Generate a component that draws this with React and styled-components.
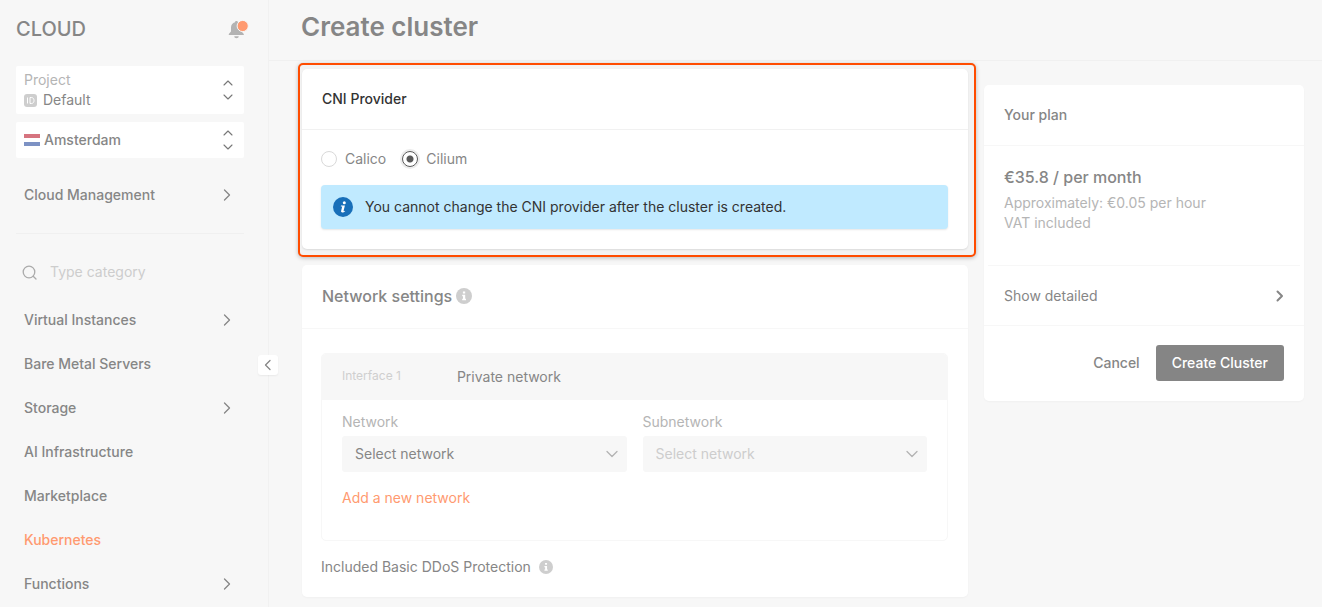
import React, { useState } from "react";
import styled, { createGlobalStyle } from "styled-components";

const GlobalStyle = createGlobalStyle`
  * {
    box-sizing: border-box;
  }
  body {
    margin: 0;
    background: #f7f7f7;
    color: #868686;
    font-family: Inter, "Liberation Sans", sans-serif;
    font-size: 14px;
    line-height: 20px;
  }
  button, input, select {
    font: inherit;
    color: inherit;
  }
  h1, h2, p {
    margin: 0;
  }
`;

const Page = styled.div`
  display: flex;
  align-items: stretch;
  min-height: 100vh;
`;

const Sidebar = styled.aside`
  position: relative;
  flex: none;
  width: 269px;
  padding: 0 24px 0 16px;
  border-right: 1px solid #f1f1f1;
`;

const Brand = styled.div`
  display: flex;
  align-items: center;
  justify-content: space-between;
  height: 58px;
  margin-bottom: 8px;
  font-size: 20px;
  font-weight: 500;
`;

const BellButton = styled.button`
  display: flex;
  padding: 0;
  margin-right: -5px;
  border: none;
  background: none;
`;

const Switcher = styled.button`
  display: flex;
  align-items: center;
  justify-content: space-between;
  width: 100%;
  height: ${props => (props.$tall ? "48px" : "36px")};
  margin-bottom: 8px;
  padding: 0 8px;
  border: none;
  border-radius: 2px;
  background: #fff;
  text-align: left;
  font-weight: ${props => (props.$tall ? 400 : 500)};
`;

const SwitcherLabel = styled.span`
  display: block;
  color: #b5b5b5;
`;

const SwitcherValue = styled.span`
  display: flex;
  align-items: center;
  gap: ${props => props.$gap || "4px"};
`;

const Nav = styled.nav`
  display: flex;
  flex-direction: column;
`;

const NavLink = styled.a`
  display: flex;
  align-items: center;
  justify-content: space-between;
  height: 44px;
  padding: 0 12px 0 8px;
  color: ${props => (props.$active ? "#ff9a70" : "#868686")};
  font-weight: 500;
  text-decoration: none;
`;

const Management = styled.div`
  padding: 7px 0 16px;
  margin-bottom: 16px;
  border-bottom: 1px solid #f0f0f0;
`;

const Search = styled.label`
  display: flex;
  align-items: center;
  gap: 13px;
  height: 44px;
  margin-bottom: 4px;
  padding-left: 6px;

  input {
    width: 100%;
    min-width: 0;
    padding: 0;
    border: none;
    outline: none;
    background: none;
  }
  svg {
    flex: none;
  }
  input::placeholder {
    color: #cdcdcd;
    opacity: 1;
  }
`;

// sits on top of the sidebar's right edge
const Collapse = styled.button`
  position: absolute;
  top: 355px;
  right: -10px;
  display: flex;
  align-items: center;
  justify-content: center;
  width: 20px;
  height: 20px;
  padding: 0;
  border: none;
  border-radius: 3px;
  background: #fff;
  box-shadow: 0 1px 2px rgba(0, 0, 0, 0.06);
`;

const Main = styled.main`
  flex: 1;
  min-width: 0;
`;

const Header = styled.header`
  height: 61px;
  padding: 11px 32px 0;
  border-bottom: 1px solid #f0f0f0;

  h1 {
    font-size: 26px;
    line-height: 32px;
    font-weight: 600;
  }
`;

const Content = styled.div`
  display: flex;
  align-items: flex-start;
  gap: 8px;
  padding: 2px 18px 10px 29px;
`;

const Column = styled.div`
  flex: 1;
  min-width: 0;
`;

const Highlight = styled.div`
  padding: 4px 6px 6px 2px;
  border: 2px solid #ff4c00;
  border-radius: 5px;
  background: #f3f3f3;
  box-shadow: 0 1px 4px rgba(0, 0, 0, 0.25);
`;

const Card = styled.section`
  border-radius: 5px;
  background: #fff;
  box-shadow: 0 1px 2px rgba(0, 0, 0, ${props => (props.$raised ? 0.1 : 0.03)});
`;

const NetworkCard = styled(Card)`
  margin: 8px 8px 0 4px;
`;

const PlanCard = styled(Card)`
  flex: none;
  width: 320px;
  margin-top: 22px;
`;

const CardHead = styled.div`
  display: flex;
  align-items: center;
  gap: 4px;
  height: ${props => (props.$large ? "64px" : "61px")};
  padding: 0 20px ${props => (props.$large ? "1px" : "0")};
  border-bottom: 1px solid ${props => (props.$strong ? "#f1f1f1" : "#f7f7f7")};

  h2 {
    color: ${props => (props.$strong ? "#333" : "#868686")};
    font-size: ${props => (props.$large ? "16px" : "14px")};
    font-weight: 500;
  }
`;

const ProviderBody = styled.div`
  padding: 19px 20px 20px 19px;
`;

const Radios = styled.div`
  display: flex;
  gap: 16px;
  margin-bottom: 16px;
`;

const Radio = styled.label`
  display: flex;
  align-items: center;
  gap: 8px;

  input {
    appearance: none;
    width: 16px;
    height: 16px;
    margin: 0;
    border: 1px solid #d9d9d9;
    border-radius: 50%;
    background: #fff;
  }
  input:checked {
    border-color: #595959;
    background: radial-gradient(circle, #595959 3px, #fff 4px);
    box-shadow: 0 0 0 2px #ececec;
  }
`;

const Notice = styled.div`
  display: flex;
  align-items: center;
  gap: 12px;
  height: 44px;
  padding: 0 12px;
  border-radius: 4px;
  background: #c0eaff;
  box-shadow: 0 1px 2px rgba(0, 0, 0, 0.1);
  color: #333;
`;

const NetworkBody = styled.div`
  padding: 24px 20px 20px 19px;
`;

const Interface = styled.div`
  overflow: hidden;
  margin-bottom: 16px;
  border: 1px solid #f7f7f7;
  border-radius: 5px;
`;

const InterfaceHead = styled.div`
  display: flex;
  align-items: center;
  gap: 56px;
  height: 46px;
  padding: 0 20px;
  background: #f7f7f7;

  small {
    color: #cfcfcf;
    font-size: 12px;
    line-height: 16px;
    padding-bottom: 2px;
  }
`;

const Fields = styled.div`
  display: grid;
  grid-template-columns: 1fr 1fr;
  gap: 16px;
  padding: 12px 20px 16px;
`;

const Field = styled.label`
  display: block;
  color: #b5b5b5;
`;

const SelectBox = styled.span`
  display: flex;
  align-items: center;
  margin-top: 4px;
  border-radius: 3px;
  background: #f7f7f7;
  color: #b3b3b3;

  select {
    appearance: none;
    flex: 1;
    height: 36px;
    margin-right: -24px;
    padding: 0 24px 0 13px;
    border: none;
    background: none;
    color: #868686;
  }
  select:disabled {
    color: #cdcdcd;
    opacity: 1;
  }
  svg {
    margin-right: 8px;
    pointer-events: none;
  }
`;

const AddLink = styled.a`
  display: inline-block;
  margin: 0 20px 32px;
  color: #ff9a70;
  text-decoration: none;
`;

const Protection = styled.p`
  display: flex;
  align-items: center;
  gap: 8px;
`;

const Price = styled.div`
  height: 119px;
  padding: 20px 20px 0;
  color: #b5b5b5;

  strong {
    display: block;
    margin-bottom: 5px;
    color: #868686;
    font-size: 16px;
    line-height: 22px;
    font-weight: 500;
  }
`;

const Details = styled.button`
  display: flex;
  align-items: center;
  justify-content: space-between;
  width: calc(100% - 8px);
  height: 60px;
  margin: 0 4px;
  padding: 0 16px;
  border: none;
  border-top: 1px solid #f7f7f7;
  background: none;
`;

const Actions = styled.div`
  display: flex;
  justify-content: flex-end;
  padding: 19px 20px 20px;
  border-top: 1px solid #f7f7f7;
`;

const Button = styled.button`
  height: 36px;
  padding: 0 16px;
  border: none;
  border-radius: 3px;
  background: ${props => (props.$primary ? "#858585" : "none")};
  color: ${props => (props.$primary ? "#fff" : "#868686")};
  font-weight: 500;
`;

const Stroke = ({ d, width, height, weight = 1.3, color = "currentColor" }) => (
  <svg width={width} height={height} viewBox={`0 0 ${width} ${height}`} fill="none" aria-hidden="true">
    <path d={d} stroke={color} strokeWidth={weight} strokeLinecap="round" strokeLinejoin="round" />
  </svg>
);

const ChevronRight = () => <Stroke width={10} height={14} d="M2.5 2 7.5 7l-5 5" />;

const UpDown = () => (
  <Stroke width={16} height={24} color="#777" weight={1.1} d="M4 7 8 3l4 4M4 17l4 4 4-4" />
);

const ChevronDown = () => <Stroke width={14} height={10} d="M2 2.5 7 7.5l5-5" />;

const Bell = () => (
  <svg width="22" height="22" viewBox="0 0 22 22" aria-hidden="true">
    <path
      d="M9.5 3c.8 0 1.300.5 1.300 1.200 2.500.7 3.800 2.600 3.800 5.200v4l2.200 2.600v1H1.800v-1l2.200-2.600v-4c0-2.600 1.400-4.500 4-5.200C8 3.500 8.700 3 9.500 3z"
      fill="#b3b3b3"
    />
    <path d="M7.200 18.300h4.600a2.300 2 0 0 1-4.600 0z" fill="#b3b3b3" />
    <circle cx="15.700" cy="8" r="5.600" fill="#ff9a70" stroke="#f7f7f7" />
  </svg>
);

const InfoIcon = ({ size }) => (
  <svg width={size} height={size} viewBox="0 0 16 16" aria-hidden="true">
    <circle cx="8" cy="8" r="8" fill="#cecece" />
    <path d="M6.900 3.500h2.300v2H6.900zM6.200 6.800h3v4h.8v1.500H6.200v-1.500H7V8.200h-.8z" fill="#fff" />
  </svg>
);

const NoticeIcon = () => (
  <svg width="20" height="20" viewBox="0 0 20 20" aria-hidden="true">
    <circle cx="10" cy="10" r="10" fill="#186fb9" />
    <circle cx="11.300" cy="5.700" r="1.500" fill="#fff" />
    <path d="M8 8.400h3.900l-1.300 5.400c-.1.500.3.600 1.300-.1l.3.500c-1.500 1.500-4.500 2-4.100-.1l1.100-4.600H7.800z" fill="#fff" />
  </svg>
);

const IdIcon = () => (
  <svg width="13" height="13" viewBox="0 0 13 13" fill="none" aria-hidden="true">
    <rect width="13" height="13" rx="3" fill="#cecece" />
    <path d="M3.500 3.500v6M6 3.500h1.300c1.700 0 2.700 1.200 2.700 3s-1 3-2.700 3H6z" stroke="#fff" />
  </svg>
);

const Flag = () => (
  <svg width="16" height="12" viewBox="0 0 16 12" aria-hidden="true">
    <path d="M0 0h16v4H0z" fill="#d6747f" />
    <path d="M0 4h16v4H0z" fill="#fff" />
    <path d="M0 8h16v4H0z" fill="#7d92c4" />
  </svg>
);

const SearchIcon = () => (
  <svg width="15" height="15" viewBox="0 0 15 15" fill="none" aria-hidden="true">
    <circle cx="7" cy="7" r="5.800" stroke="#ababab" strokeWidth="1.300" />
    <path d="m11.200 11.200 2.800 2.800" stroke="#ababab" strokeWidth="1.300" strokeLinecap="round" />
  </svg>
);

const categories = [
  { name: "Virtual Instances", nested: true },
  { name: "Bare Metal Servers" },
  { name: "Storage", nested: true },
  { name: "AI Infrastructure" },
  { name: "Marketplace" },
  { name: "Kubernetes", active: true },
  { name: "Functions", nested: true }
];

const providers = ["Calico", "Cilium"];

const App = () => {
  const [provider, setProvider] = useState("Cilium");
  const [query, setQuery] = useState("");

  const visible = categories.filter(({ name }) =>
    name.toLowerCase().includes(query.toLowerCase())
  );

  return (
    <>
      <GlobalStyle />
      <Page>
        <Sidebar>
          <Brand>
            CLOUD
            <BellButton type="button" aria-label="Notifications">
              <Bell />
            </BellButton>
          </Brand>
          <Switcher type="button" $tall>
            <span>
              <SwitcherLabel>Project</SwitcherLabel>
              <SwitcherValue $gap="6px">
                <IdIcon />
                Default
              </SwitcherValue>
            </span>
            <UpDown />
          </Switcher>
          <Switcher type="button">
            <SwitcherValue>
              <Flag />
              Amsterdam
            </SwitcherValue>
            <UpDown />
          </Switcher>
          <Management>
            <NavLink href="#management">
              Cloud Management
              <ChevronRight />
            </NavLink>
          </Management>
          <Search>
            <SearchIcon />
            <input
              type="text"
              placeholder="Type category"
              aria-label="Type category"
              value={query}
              onChange={e => setQuery(e.target.value)}
            />
          </Search>
          <Nav>
            {visible.map(({ name, nested, active }) => (
              <NavLink key={name} href="#category" $active={active}>
                {name}
                {nested && <ChevronRight />}
              </NavLink>
            ))}
          </Nav>
          <Collapse type="button" aria-label="Collapse menu">
            <Stroke width={10} height={14} d="M7 2.5 2.5 7 7 11.5" />
          </Collapse>
        </Sidebar>
        <Main>
          <Header>
            <h1>Create cluster</h1>
          </Header>
          <Content>
            <Column>
              <Highlight>
                <Card $raised>
                  <CardHead $strong>
                    <h2>CNI Provider</h2>
                  </CardHead>
                  <ProviderBody>
                    <Radios>
                      {providers.map(name => (
                        <Radio key={name}>
                          <input
                            type="radio"
                            name="provider"
                            checked={provider === name}
                            onChange={() => setProvider(name)}
                          />
                          {name}
                        </Radio>
                      ))}
                    </Radios>
                    <Notice>
                      <NoticeIcon />
                      You cannot change the CNI provider after the cluster is created.
                    </Notice>
                  </ProviderBody>
                </Card>
              </Highlight>
              <NetworkCard>
                <CardHead $large>
                  <h2>Network settings</h2>
                  <InfoIcon size={16} />
                </CardHead>
                <NetworkBody>
                  <Interface>
                    <InterfaceHead>
                      <small>Interface 1</small>
                      <span>Private network</span>
                    </InterfaceHead>
                    <Fields>
                      <Field>
                        Network
                        <SelectBox>
                          <select>
                            <option>Select network</option>
                          </select>
                          <ChevronDown />
                        </SelectBox>
                      </Field>
                      <Field>
                        Subnetwork
                        <SelectBox>
                          <select disabled>
                            <option>Select network</option>
                          </select>
                          <ChevronDown />
                        </SelectBox>
                      </Field>
                    </Fields>
                    <AddLink href="#new-network">Add a new network</AddLink>
                  </Interface>
                  <Protection>
                    Included Basic DDoS Protection
                    <InfoIcon size={14} />
                  </Protection>
                </NetworkBody>
              </NetworkCard>
            </Column>
            <PlanCard>
              <CardHead>
                <h2>Your plan</h2>
              </CardHead>
              <Price>
                <strong>€35.8 / per month</strong>
                <p>Approximately: €0.05 per hour</p>
                <p>VAT included</p>
              </Price>
              <Details type="button">
                Show detailed
                <Stroke width={9} height={14} weight={2} d="M2.5 2.5 7 7l-4.500 4.500" />
              </Details>
              <Actions>
                <Button type="button">Cancel</Button>
                <Button type="button" $primary>
                  Create Cluster
                </Button>
              </Actions>
            </PlanCard>
          </Content>
        </Main>
      </Page>
    </>
  );
};

export default App;
